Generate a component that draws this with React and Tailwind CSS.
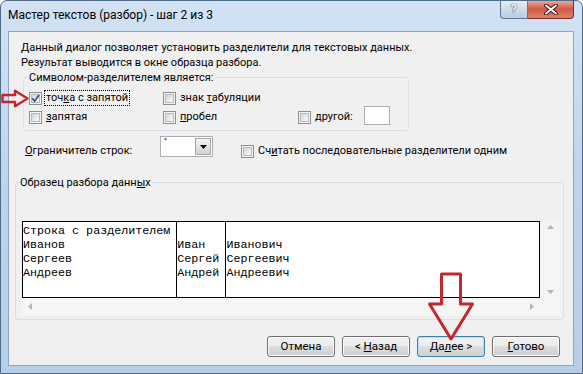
import React from "react";

const ui = "font-['Segoe_UI','Roboto',sans-serif] text-[11px] text-black";

const Box = ({ checked }) => (
  <span className="flex h-[13px] w-[13px] shrink-0 items-center justify-center border border-[#8f8f8f] bg-[#f6f6f6]">
    <span className="flex h-[9px] w-[9px] items-center justify-center border border-[#b4b9bf] bg-linear-to-br from-[#d2d5d9] to-[#fbfbfb]">
      {checked && (
        <svg width="9" height="9" viewBox="0 0 9 9" className="shrink-0">
          <path d="M1.2 4.4 L3.6 7.2 L8 1" fill="none" stroke="#3b4f86" strokeWidth="1.7" />
        </svg>
      )}
    </span>
  </span>
);

const Check = ({ checked, focus, className = "", children }) => (
  <div className={"flex h-[16px] items-center " + className}>
    <Box checked={checked} />
    <span
      className={
        "ml-[2px] border px-[1px] leading-[14px] " +
        (focus ? "border-dotted border-black" : "border-transparent")
      }
    >
      {children}
    </span>
  </div>
);

const Btn = ({ primary, children }) => (
  <button
    className={
      "h-[21px] w-[68px] rounded-[3px] border bg-[linear-gradient(#f2f2f2,#ebebeb_50%,#dddddd_50%,#cfcfcf)] text-[11.5px] leading-[19px] " +
      (primary
        ? "border-[#3c7fb1] shadow-[inset_0_0_0_1px_#b7dcf4]"
        : "border-[#707070] shadow-[inset_0_0_0_1px_#fbfbfb]")
    }
  >
    {children}
  </button>
);

const Tri = ({ dir }) => {
  const d = {
    up: "M0 4 L3.5 0 L7 4 Z",
    down: "M0 0 L7 0 L3.5 4 Z",
    left: "M4 0 L4 7 L0 3.5 Z",
    right: "M0 0 L0 7 L4 3.5 Z",
  }[dir];
  const w = dir === "up" || dir === "down" ? 7 : 4;
  const h = dir === "up" || dir === "down" ? 4 : 7;
  return (
    <svg width={w} height={h} viewBox={`0 0 ${w} ${h}`}>
      <path d={d} fill="#b3b3b3" />
    </svg>
  );
};

const rows = [
  ["Строка с разделителем", "", ""],
  ["Иванов", "Иван", "Иванович"],
  ["Сергеев", "Сергей", "Сергеевич"],
  ["Андреев", "Андрей", "Андреевич"],
];

export default function App() {
  return (
    <div className={"relative h-[374px] w-[583px] overflow-hidden rounded-t-[7px] border border-[#4f6b8a] bg-linear-to-b from-[#d2e2f4] via-[#bed4ec] to-[#b6cee8] " + ui}>
      {/* title bar */}
      <div className="flex h-[30px] items-start">
        <div className="pl-[7px] pt-[7px] text-[12px] leading-[15px]">
          Мастер текстов (разбор) - шаг 2 из 3
        </div>
        <div className="ml-auto mr-[8px] -mt-[1px] flex">
          <div className="flex h-[19px] w-[28px] items-center justify-center rounded-bl-[4px] border border-t-0 border-[#5e7795] bg-linear-to-b from-[#e6eef8] to-[#b9cbe2] text-[13px] font-bold text-[#f4f8fc] [text-shadow:0_0_1px_#2c3e55,0_0_1px_#2c3e55]">
            ?
          </div>
          <div className="flex h-[19px] w-[46px] items-center justify-center rounded-br-[4px] border border-t-0 border-l-0 border-[#7a2c22] bg-linear-to-b from-[#eab0a4] via-[#cf5a45] to-[#dc806a]">
            <svg width="14" height="11" viewBox="0 0 14 11">
              <path d="M2 1.5 L12 9.5 M12 1.5 L2 9.5" stroke="#4a1a14" strokeWidth="4" strokeLinecap="round" />
              <path d="M2 1.5 L12 9.5 M12 1.5 L2 9.5" stroke="#ffffff" strokeWidth="2" strokeLinecap="round" />
            </svg>
          </div>
        </div>
      </div>

      {/* client area */}
      <div className="ml-[7px] mr-[8px] flex h-[335px] flex-col border border-[#8ea5bf] bg-[#f0f0f0]">
        <div className="ml-[12px] mt-[8px] leading-[15px]">
          <div>Данный диалог позволяет установить разделители для текстовых данных.</div>
          <div>Результат выводится в окне образца разбора.</div>
        </div>

        <fieldset className="ml-[14px] w-[386px] rounded-[3px] border border-[#d5dfe5] pb-[5px]">
          <legend className="ml-[4px] px-[1px] leading-[15px]">Символом-разделителем является:</legend>
          <div className="ml-[5px] mt-[5px] flex">
            <Check checked focus className="w-[134px]">
              точ<u>к</u>а с запятой
            </Check>
            <Check className="w-[135px]">
              знак <u>т</u>абуляции
            </Check>
          </div>
          <div className="ml-[5px] mt-[3px] flex">
            <Check className="w-[134px]">
              <u>з</u>апятая
            </Check>
            <Check className="w-[135px]">
              <u>п</u>робел
            </Check>
            <Check className="w-[66px]">
              <u>д</u>ругой:
            </Check>
            <div className="-mt-[3px] h-[19px] w-[26px] border border-[#abadb3] bg-white" />
          </div>
        </fieldset>

        <div className="mt-[5px] flex items-start">
          <span className="ml-[16px] mt-[7px] w-[135px] leading-[15px]">
            <u>О</u>граничитель строк:
          </span>
          <div className="flex h-[21px] w-[53px] border border-[#abadb3] bg-white p-[1px]">
            <div className="flex-1 pl-[2px] text-[9px] leading-[9px]">"</div>
            <div className="flex w-[16px] items-center justify-center border border-[#a7a7a7] bg-linear-to-b from-[#f4f4f4] to-[#d3d3d3]">
              <svg width="7" height="4" viewBox="0 0 7 4">
                <path d="M0 0 H7 L3.5 4 Z" fill="#000" />
              </svg>
            </div>
          </div>
          <Check className="ml-[28px] mt-[7px]">
            Сч<u>и</u>тать последовательные разделители одним
          </Check>
        </div>

        <fieldset className="ml-[6px] mt-[16px] w-[549px] rounded-[3px] border border-[#d5dfe5] pb-[4px]">
          <legend className="ml-[4px] leading-[15px]">
            Образец разбора данн<u>ы</u>х
          </legend>
          <div className="ml-[6px] mt-[31px] flex h-[94px] w-[538px] flex-col bg-[#f5f5f5]">
            <div className="flex h-[77px]">
              <div className="flex w-[518px] border border-black bg-white pt-[2px] font-['Liberation_Mono',monospace] text-[11.7px] leading-[14px]">
                {[0, 1, 2].map((c) => (
                  <div
                    key={c}
                    className={
                      "whitespace-pre " +
                      (c === 0 ? "w-[22ch] border-r border-black -mt-[2px] pt-[2px]" : c === 1 ? "w-[7ch] border-r border-black -mt-[2px] pt-[2px]" : "flex-1")
                    }
                  >
                    {rows.map((r, i) => (
                      <div key={i} className="h-[14px]">
                        {r[c]}
                      </div>
                    ))}
                  </div>
                ))}
              </div>
              <div className="flex flex-1 flex-col items-center justify-between py-[4px]">
                <Tri dir="up" />
                <Tri dir="down" />
              </div>
            </div>
            <div className="flex h-[17px] w-[518px] items-center justify-between px-[6px]">
              <Tri dir="left" />
              <Tri dir="right" />
            </div>
          </div>
        </fieldset>

        <div className="mb-[8px] mr-[13px] mt-auto flex justify-end gap-[7px]">
          <Btn>Отмена</Btn>
          <Btn>
            &lt; <u>Н</u>азад
          </Btn>
          <Btn primary>
            Да<u>л</u>ее &gt;
          </Btn>
          <Btn>
            <u>Г</u>отово
          </Btn>
        </div>
      </div>

      {/* red annotation arrows */}
      <svg className="absolute left-0 top-[88px]" width="29" height="19" viewBox="0 0 29 19">
        <path d="M1.5 6 H14 V1.8 L26.5 9.5 L14 17.2 V13 H1.5 Z" fill="none" stroke="#c4262e" strokeWidth="2.4" strokeLinejoin="round" />
      </svg>
      <svg className="absolute left-[426px] top-[271px]" width="48" height="70" viewBox="0 0 48 70">
        <path d="M14.5 2 H33.5 V32 H45.5 L24 67 L2.5 32 H14.5 Z" fill="none" stroke="#c4262e" strokeWidth="3" strokeLinejoin="round" />
      </svg>
    </div>
  );
}
